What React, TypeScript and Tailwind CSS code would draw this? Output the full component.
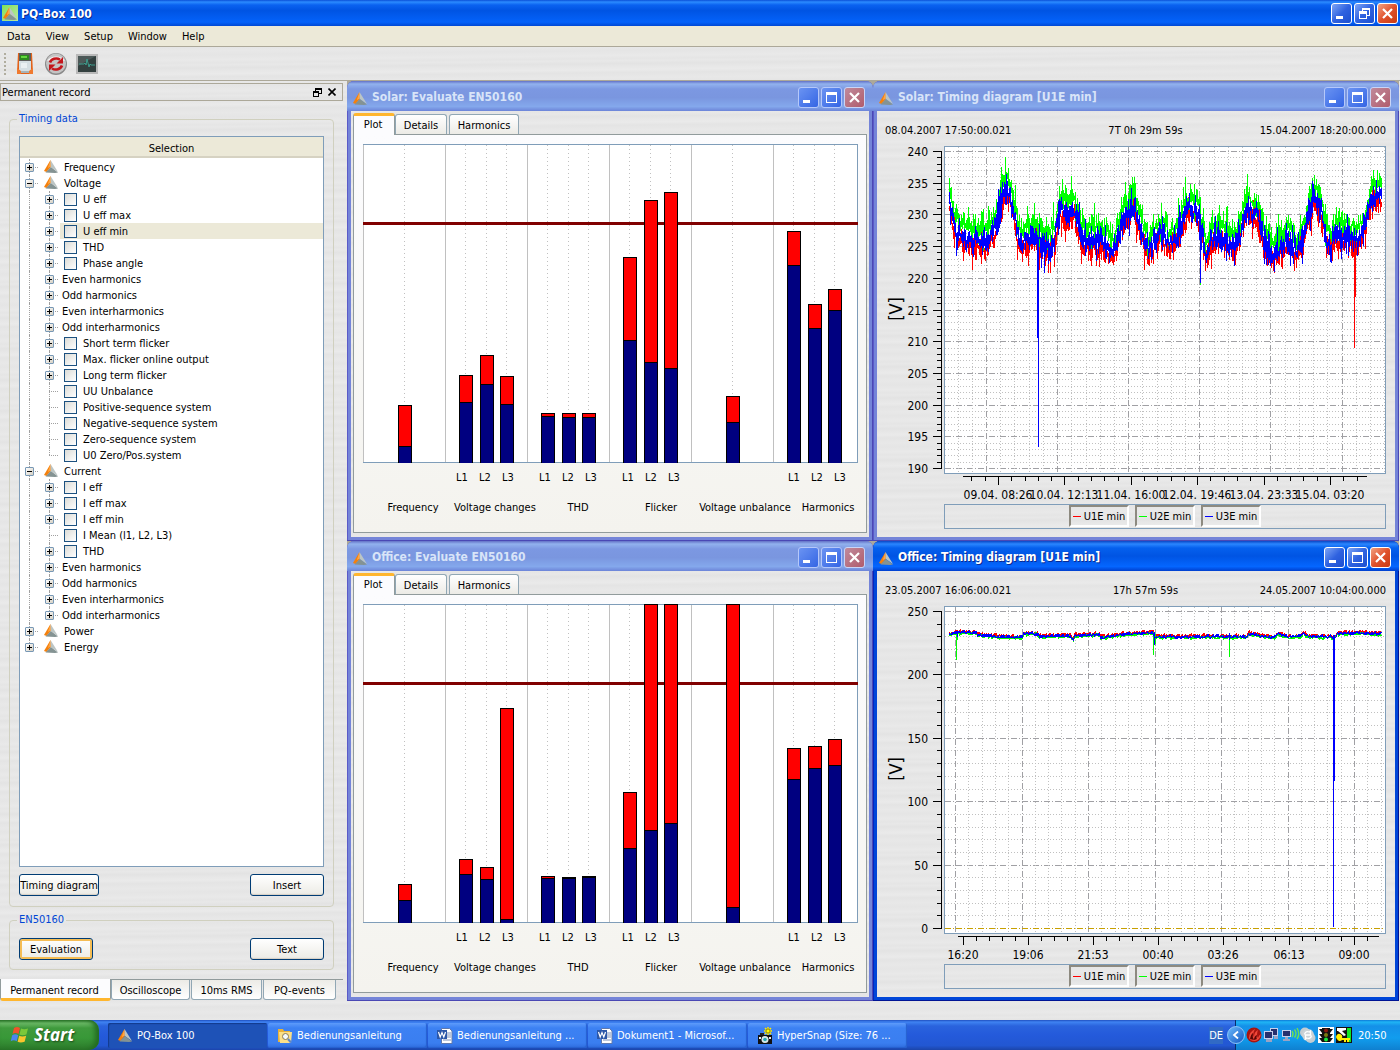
import React from "react";

const METAL =
  "bg-[#e6e6e6] bg-[repeating-linear-gradient(179.4deg,#e9e9e9_0px,#e5e5e5_3px,#e8e8e8_5px,#e3e3e3_8px,#e7e7e7_11px,#eaeaea_14px,#e4e4e4_17px,#e8e8e8_22px,#e5e5e5_26px,#e9e9e9_31px)]";

/* ---------- icons ---------- */

function Prism({ className = "" }: { className?: string }) {
  return (
    <svg viewBox="0 0 16 15" className={`shrink-0 ${className}`} aria-hidden="true">
      <path d="M7.5 1 L1 12 L3.5 13 L7.8 8 Z" fill="#f5800c" />
      <path d="M7.5 1 L4.8 9 L7.8 7.5 Z" fill="#ffa544" />
      <path d="M7.5 1 L15 13 L7.8 8 Z" fill="#bcc5c4" />
      <path d="M7.8 8 L15 13.5 L12 14 L2.5 13.6 Z" fill="#849393" />
    </svg>
  );
}

function BoxIcon() {
  return (
    <svg viewBox="0 0 18 24" className="h-6 w-[18px]" aria-hidden="true">
      <path d="M2 1h14l1 20h-3v1H4v-1H1z" fill="#e2621b" />
      <rect x="3" y="1" width="12" height="17" fill="#5d5f5c" />
      <rect x="4" y="3" width="9" height="5" fill="#2d8a1e" />
      <rect x="5" y="4" width="6" height="2" fill="#62d83c" />
      <path d="M3 9h12v9l-2 2H5l-2-2z" fill="#d5dfe3" />
      <path d="M5 11h6v5H5z" fill="#eaf0f2" />
      <path d="M1 16l4 3v3H1zM17 16l-4 3v3h4z" fill="#f07a30" />
      <path d="M5 19h8v2H5z" fill="#a7b3b7" />
    </svg>
  );
}

function SyncIcon() {
  return (
    <svg viewBox="0 0 24 24" className="h-6 w-6" aria-hidden="true">
      <circle cx="12" cy="12" r="11" fill="#8a8a8a" />
      <circle cx="12" cy="11.5" r="10" fill="#c4c4c4" />
      <path d="M3 9a10 8 0 0 1 18 0a18 9 0 0 0-18 0z" fill="#f4f4f4" />
      <path d="M6 10.500a6.500 5.500 0 0 1 10-3" fill="none" stroke="#c4161c" strokeWidth="2.600" />
      <path d="M19 5v6.500h-6.500z" fill="#c4161c" />
      <path d="M18 13.500a6.500 5.500 0 0 1-10 3" fill="none" stroke="#c4161c" strokeWidth="2.600" />
      <path d="M5 19v-6.500h6.500z" fill="#c4161c" />
    </svg>
  );
}

function ScopeIcon() {
  return (
    <svg viewBox="0 0 22 20" className="h-5 w-[22px]" aria-hidden="true">
      <rect x="0" y="0" width="22" height="20" fill="#b9b9b9" />
      <rect x="2" y="2" width="18" height="16" fill="#33403f" />
      <path d="M2 2h18L2 12z" fill="#4d5958" />
      <path d="M3 10h5l1-1 1 2 1-6 2 8 1-3 1 1h4" fill="none" stroke="#3f9c8d" />
    </svg>
  );
}

/* ---------- window frame ---------- */

type ControlKind = "min" | "max" | "restore" | "close";

function Control({ kind, active }: { kind: ControlKind; active: boolean }) {
  const tone =
    kind === "close"
      ? active
        ? "border-white bg-linear-to-br from-[#f0a080] via-[#e0512b] to-[#c93a10]"
        : "border-[#c9d5f7] bg-linear-to-br from-[#c08a9c] to-[#b05c6c]"
      : active
        ? "border-white bg-linear-to-br from-[#7fa4f5] via-[#2f62e0] to-[#1c4fd0]"
        : "border-[#b5c8fa] bg-linear-to-br from-[#6b93f2] to-[#3565e4]";
  return (
    <button
      type="button"
      aria-label={kind}
      className={`flex size-[21px] items-center justify-center rounded-[3px] border ${tone}`}
    >
      <svg viewBox="0 0 19 19" className="size-[19px]" shapeRendering={kind === "close" ? "auto" : "crispEdges"} aria-hidden="true">
        {kind === "min" && <rect x="4" y="12" width="7" height="3" fill="#fff" />}
        {kind === "max" && <path d="M4 4h11v11H4zM5 7v7h9V7z" fill="#fff" fillRule="evenodd" />}
        {kind === "restore" && (
          <path
            d="M7 4h8v8h-3v3H4V7h3zM8 6v1h4v4h2V6zM5 10v4h6v-4z"
            fill="#fff"
            fillRule="evenodd"
          />
        )}
        {kind === "close" && <path d="M5 5l9 9M14 5l-9 9" stroke="#fff" strokeWidth="2.200" />}
      </svg>
    </button>
  );
}

function Frame({ title, active = false, children }: { title: string; active?: boolean; children: React.ReactNode }) {
  return (
    <section
      className={`flex min-w-0 flex-col rounded-t-[7px] px-1 pb-1 ${
        active
          ? "bg-[#0046d8] shadow-[inset_-1px_-1px_0_#001494,inset_1px_0_0_#0026c0]"
          : "bg-[#7484d8] shadow-[inset_-1px_-1px_0_#4a48b4,inset_1px_0_0_#5a5ac8]"
      }`}
    >
      <header
        className={`-mx-1 flex h-[30px] shrink-0 items-center rounded-t-[7px] pr-2 pl-[5px] ${
          active
            ? "bg-[linear-gradient(#0a47c6_0,#2a86ff_3px,#0560ee_7px,#0054e3_50%,#0466ff_85%,#003fce_100%)]"
            : "bg-[linear-gradient(#6371c6_0,#92b2ee_3px,#7c98e2_8px,#7a96df_55%,#84a8ec_85%,#6c84d8_100%)]"
        }`}
      >
        <Prism className="mt-1 h-[15px] w-4" />
        <h2
          className={`ml-1 flex-1 truncate pt-0.5 text-[12px] font-bold ${
            active ? "text-white [text-shadow:1px_1px_0_#0a2a90]" : "text-[#d8e4f8]"
          }`}
        >
          {title}
        </h2>
        <div className="mt-0.5 flex gap-0.5">
          <Control kind="min" active={active} />
          <Control kind="max" active={active} />
          <Control kind="close" active={active} />
        </div>
      </header>
      <div className={`flex flex-1 flex-col ${METAL}`}>{children}</div>
    </section>
  );
}

/* ---------- evaluation bar chart ---------- */

type Bar = { x: number; top: number; mid: number };

const BAR_X = [398, 459, 480, 500, 541, 562, 582, 623, 644, 664, 726, 787, 808, 828];
const toBars = (pairs: number[][]): Bar[] => pairs.map(([top, mid], i) => ({ x: BAR_X[i], top, mid }));

const SOLAR_BARS = toBars([
  [405, 446], [375, 402], [355, 384], [376, 404], [413, 416], [413, 417], [413, 417],
  [257, 340], [200, 362], [192, 368], [396, 422], [231, 265], [304, 328], [289, 310],
]);
const OFFICE_BARS = toBars([
  [424, 440], [399, 414], [407, 419], [248, 459], [416, 418], [417, 418], [416, 417],
  [332, 388], [144, 370], [144, 363], [144, 447], [288, 319], [286, 308], [279, 305],
]);

const PHASE_LABELS: [number, string][] = [
  [462, "L1"], [485, "L2"], [508, "L3"],
  [545, "L1"], [568, "L2"], [591, "L3"],
  [628, "L1"], [651, "L2"], [674, "L3"],
  [794, "L1"], [817, "L2"], [840, "L3"],
];
const GROUP_LABELS: [number, string][] = [
  [413, "Frequency"], [495, "Voltage changes"], [578, "THD"],
  [661, "Flicker"], [745, "Voltage unbalance"], [828, "Harmonics"],
];

function BarPlot({ bars, label }: { bars: Bar[]; label: string }) {
  return (
    <svg viewBox="354 135 512 397" className="block w-full" role="img" aria-label={label}>
      <g shapeRendering="crispEdges">
        <rect x="363" y="144" width="495" height="319" fill="#fff" />
        <path d="M363 144.500H858M363 462.500H858M857.500 144V463" stroke="#7f9db9" fill="none" />
        {[363, 445, 527, 609, 691, 773].map((x) => (
          <path key={x} d={`M${x}.5 145V462`} stroke="#c0c0c0" />
        ))}
        {BAR_X.map((x) => (
          <path key={x} d={`M${x + 6}.5 145V462`} stroke="#c0c0c0" strokeDasharray="1 3" />
        ))}
        <rect x="363" y="222" width="495" height="3" fill="#800000" />
        {bars.map((b) => (
          <g key={b.x}>
            <rect x={b.x} y={b.top} width="14" height={463 - b.top} fill="#000" />
            <rect x={b.x + 1} y={b.top + 1} width="12" height={Math.max(b.mid - b.top - 1, 0)} fill="#f00" />
            <rect x={b.x + 1} y={b.mid + 1} width="12" height={462 - b.mid} fill="#000080" />
          </g>
        ))}
      </g>
      <g fontSize="11" textAnchor="middle">
        {PHASE_LABELS.map(([x, t]) => (
          <text key={x} x={x} y="481">{t}</text>
        ))}
        {GROUP_LABELS.map(([x, t]) => (
          <text key={x} x={x} y="511">{t}</text>
        ))}
      </g>
    </svg>
  );
}

function EvaluateWindow({ title, bars }: { title: string; bars: Bar[] }) {
  return (
    <Frame title={title}>
      <div role="tablist" className="relative z-10 -mb-px flex items-end pt-0.5 pl-0.5 text-[11px]">
        <button
          type="button"
          role="tab"
          aria-selected="true"
          className="h-[22px] w-[42px] rounded-t-[3px] border-x border-t-[3px] border-x-[#919b9c] border-t-[#ffb62e] bg-[#fcfcfe] pr-0.5 pb-0.5 leading-4"
        >
          Plot
        </button>
        <button
          type="button"
          role="tab"
          className="mb-px h-5 w-[52px] rounded-t-[3px] border border-b-0 border-[#91a7b4] bg-linear-to-b from-white to-[#ecebe6] pt-0.5 leading-4"
        >
          Details
        </button>
        <button
          type="button"
          role="tab"
          className="mb-px ml-0.5 h-5 w-[70px] rounded-t-[3px] border border-b-0 border-[#91a7b4] bg-linear-to-b from-white to-[#ecebe6] pt-0.5 leading-4"
        >
          Harmonics
        </button>
      </div>
      <div className="mx-0.5 border border-[#919b9c] bg-linear-to-b from-[#fcfcfe] to-[#f4f3ee]">
        <BarPlot bars={bars} label={title} />
      </div>
    </Frame>
  );
}

/* ---------- timing diagram ---------- */

function makeRandom(seed: number) {
  let s = seed;
  return () => {
    s = (s * 1664525 + 1013904223) % 4294967296;
    return s / 4294967296 - 0.5;
  };
}

function interpolate(points: number[][], x: number) {
  for (let i = 1; i < points.length; i++) {
    const [x0, y0] = points[i - 1];
    const [x1, y1] = points[i];
    if (x <= x1) return y0 + ((y1 - y0) * (x - x0)) / (x1 - x0);
  }
  return points[points.length - 1][1];
}

const DAILY = [
  [949, 203], [954, 228], [960, 236], [967, 241], [975, 239], [985, 240], [994, 232], [998, 212], [1003, 193],
  [1006, 188], [1010, 197], [1015, 222], [1020, 243], [1028, 238], [1034, 234], [1040, 243], [1050, 248],
  [1054, 238], [1058, 216], [1062, 208], [1068, 216], [1073, 210], [1078, 224], [1084, 243], [1092, 240],
  [1100, 240], [1108, 248], [1112, 253], [1117, 240], [1122, 222], [1128, 212], [1133, 203], [1138, 222],
  [1145, 243], [1150, 249], [1160, 233], [1168, 243], [1176, 240], [1184, 218], [1188, 208], [1198, 214],
  [1202, 235], [1206, 258], [1210, 240], [1218, 235], [1226, 242], [1234, 249], [1240, 233], [1247, 207],
  [1252, 214], [1258, 218], [1264, 245], [1272, 256], [1280, 248], [1288, 240], [1296, 252], [1302, 240],
  [1308, 214], [1314, 197], [1320, 208], [1325, 235], [1330, 249], [1335, 234], [1345, 235], [1355, 243],
  [1362, 233], [1367, 214], [1371, 198], [1381, 196],
];

function noisyTrace(seed: number, shift: number, spread: number) {
  const rnd = makeRandom(seed);
  const out: string[] = [];
  for (let x = 949; x <= 1381; x++) {
    const base = interpolate(DAILY, x) + shift + rnd() * 10;
    const wide = rnd() > 0.3 ? 1.8 : 1;
    const a = Math.round(base - Math.abs(rnd()) * spread * wide);
    const b = Math.round(base + Math.abs(rnd()) * spread * wide);
    out.push(`${x}.5 ${a}L${x}.5 ${b}`);
  }
  return "M" + out.join("L");
}

const LEVEL = [
  [949, 173], [957, 171], [976, 171], [977, 173], [997, 175], [1022, 176], [1023, 172], [1036, 172], [1039, 175],
  [1070, 174], [1073, 179], [1074, 174], [1098, 173], [1101, 176], [1120, 173], [1153, 171], [1154, 177],
  [1156, 175], [1228, 175], [1247, 175], [1248, 172], [1262, 174], [1274, 176], [1278, 172], [1286, 175],
  [1301, 175], [1303, 171], [1308, 175], [1330, 175], [1334, 177], [1337, 172], [1355, 171], [1372, 172], [1381, 172],
];

function flatTrace(seed: number, shift: number, height: number) {
  const rnd = makeRandom(seed);
  const out: string[] = [];
  for (let x = 949; x <= 1381; x++) {
    const y = Math.round(interpolate(LEVEL, x) + shift + rnd() * 2);
    out.push(`${x}.5 ${y}L${x}.5 ${y + height}`);
  }
  return "M" + out.join("L");
}

type DiagramData = {
  yLabels: number[];
  minorPerMajor: number;
  gridX: number;
  gridStep: number;
  axisFrom: number;
  axisTo: number;
  tickX: number;
  tickStep: number;
  xLabels: string[];
  zeroLine: boolean;
  red: string;
  green: string;
  blue: string;
};

const SOLAR: DiagramData = {
  yLabels: [240, 235, 230, 225, 220, 215, 210, 205, 200, 195, 190],
  minorPerMajor: 5,
  gridX: 986,
  gridStep: 71.1,
  axisFrom: 963,
  axisTo: 1367,
  tickX: 998,
  tickStep: 66.4,
  xLabels: ["09.04. 08:26", "10.04. 12:13", "11.04. 16:00", "12.04. 19:46", "13.04. 23:33", "15.04. 03:20"],
  zeroLine: false,
  red: noisyTrace(77, 6, 24) + "M1354.500 250V348M1355.500 250V297",
  green:
    noisyTrace(3, -13, 25) +
    "M1005.500 157V190M1062.500 179V205M1134.500 177V200M1185.500 177V205M1247.500 174V200M1200.500 270V285",
  blue: noisyTrace(19, 0, 26) + "M1037.500 240V338M1038.500 240V447M1200.500 230V283",
};

const OFFICE: DiagramData = {
  yLabels: [250, 200, 150, 100, 50, 0],
  minorPerMajor: 5,
  gridX: 955,
  gridStep: 66.5,
  axisFrom: 958,
  axisTo: 1379,
  tickX: 963,
  tickStep: 65.1,
  xLabels: ["16:20", "19:06", "21:53", "00:40", "03:26", "06:13", "09:00"],
  zeroLine: true,
  red: flatTrace(5, 0, 1),
  green: flatTrace(9, 2, 1) + "M956.500 173V200M957.500 173V180M1153.500 174V195M1155.500 174V184M1229.500 174V197",
  blue:
    flatTrace(14, 1, 1) +
    "M1333.500 175V321M1334.500 175V321M1333.500 321V467M957.500 171V177M1154.500 172V185M1229.500 173V180",
};

const TOP = 151;
const SPAN = 317;

function ticks(start: number, step: number, from: number, to: number) {
  const list: { x: number; major: boolean }[] = [];
  for (let i = -10; i < 60; i++) {
    const x = Math.round(start + (i * step) / 5);
    if (x >= from && x <= to) list.push({ x, major: i % 5 === 0 });
  }
  return list;
}

function Diagram({ d, label }: { d: DiagramData; label: string }) {
  const rows = (d.yLabels.length - 1) * d.minorPerMajor;
  const yTicks = Array.from({ length: rows + 1 }, (_, i) => ({
    y: Math.round(TOP + (SPAN * i) / rows),
    major: i % d.minorPerMajor === 0,
  }));
  return (
    <svg viewBox="877 142 518 362" className="block w-full" role="img" aria-label={label}>
      <g shapeRendering="crispEdges" fill="none">
        <rect x="944.500" y="146.500" width="441" height="327" fill="#fff" stroke="#7f9db9" />
        {yTicks.map(({ y, major }) => (
          <path
            key={y}
            d={`M945 ${y}.5H1385`}
            stroke={major ? "#a0a0a4" : "#c0c0c0"}
            strokeDasharray={major ? "6 2 1 2" : "1 2"}
          />
        ))}
        {ticks(d.gridX, d.gridStep, 946, 1384).map(({ x, major }) => (
          <path
            key={x}
            d={`M${x}.5 147V473`}
            stroke={major ? "#a0a0a4" : "#c0c0c0"}
            strokeDasharray={major ? "6 2 1 2" : "1 2"}
          />
        ))}
        {d.zeroLine && <path d="M945 468.500H1385" stroke="#c8a000" strokeDasharray="6 2 1 2" />}
        <path d={d.red} stroke="#f00" />
        <path d={d.green} stroke="#0f0" />
        <path d={d.blue} stroke="#00f" />
        <path d="M941.500 151V469" stroke="#000" />
        {yTicks.map(({ y, major }) => (
          <path key={y} d={`M${major ? 933 : 937} ${y}.5H941`} stroke="#000" />
        ))}
        <path d={`M${d.axisFrom} 476.500H${d.axisTo}`} stroke="#000" />
        {ticks(d.tickX, d.tickStep, d.axisFrom, d.axisTo).map(({ x, major }) => (
          <path key={x} d={`M${x}.5 476V${major ? 485 : 481}`} stroke="#000" />
        ))}
      </g>
      <g fontSize="12" textAnchor="end">
        {d.yLabels.map((v, i) => (
          <text key={v} x="928" y={Math.round(TOP + (SPAN * i) / (d.yLabels.length - 1)) + 5}>{v}</text>
        ))}
      </g>
      <g fontSize="12" textAnchor="middle">
        {d.xLabels.map((t, i) => (
          <text key={t} x={Math.round(d.tickX + i * d.tickStep)} y="499">{t}</text>
        ))}
      </g>
      <text fontSize="18" textAnchor="middle" transform="translate(902 309) rotate(-90)">[V]</text>
    </svg>
  );
}

function LegendItem({ color, children }: { color: string; children: string }) {
  return (
    <button
      type="button"
      className="flex h-[22px] w-[60px] items-center justify-center gap-[3px] border-2 border-t-[#8d8a80] border-r-white border-b-white border-l-[#8d8a80]"
    >
      <span className={`h-px w-2 ${color}`} />
      <span className="pt-0.5">{children}</span>
    </button>
  );
}

function TimingWindow(props: {
  title: string;
  active?: boolean;
  from: string;
  span: string;
  to: string;
  diagram: DiagramData;
}) {
  return (
    <Frame title={props.title} active={props.active}>
      <div className="flex h-[31px] items-center justify-between pt-[9px] pr-[9px] pl-2 text-[11px]">
        <span>{props.from}</span>
        <span className="pl-5">{props.span}</span>
        <span>{props.to}</span>
      </div>
      <Diagram d={props.diagram} label={props.title} />
      <div className="mr-[9px] mb-2 ml-[67px] flex h-[25px] justify-center gap-1.5 border border-[#7f9db9] text-[11px]">
        <LegendItem color="bg-[#f00]">U1E min</LegendItem>
        <LegendItem color="bg-[#0f0]">U2E min</LegendItem>
        <LegendItem color="bg-[#00f]">U3E min</LegendItem>
      </div>
    </Frame>
  );
}

/* ---------- selection tree ---------- */

type Leaf = { label: string; box?: boolean; expand?: boolean; selected?: boolean };
type Branch = { label: string; items?: Leaf[] };

const check = (label: string, selected = false): Leaf => ({ label, box: true, expand: true, selected });
const plain = (label: string): Leaf => ({ label, expand: true });
const single = (label: string): Leaf => ({ label, box: true });

const TREE: Branch[] = [
  { label: "Frequency" },
  {
    label: "Voltage",
    items: [
      check("U eff"), check("U eff max"), check("U eff min", true), check("THD"), check("Phase angle"),
      plain("Even harmonics"), plain("Odd harmonics"), plain("Even interharmonics"), plain("Odd interharmonics"),
      check("Short term flicker"), check("Max. flicker online output"), check("Long term flicker"),
      single("UU Unbalance"), single("Positive-sequence system"), single("Negative-sequence system"),
      single("Zero-sequence system"), single("U0 Zero/Pos.system"),
    ],
  },
  {
    label: "Current",
    items: [
      check("I eff"), check("I eff max"), check("I eff min"), single("I Mean (l1, L2, L3)"), check("THD"),
      plain("Even harmonics"), plain("Odd harmonics"), plain("Even interharmonics"), plain("Odd interharmonics"),
    ],
  },
  { label: "Power" },
  { label: "Energy" },
];

function Joint({ last, sign, stem }: { last?: boolean; sign?: "+" | "-"; stem?: boolean }) {
  return (
    <span className="relative block h-4 w-5 shrink-0">
      <span className={`absolute top-0 left-[9px] border-l border-dotted border-[#a0a0a0] ${last ? "h-2" : "h-4"}`} />
      {!stem && <span className="absolute top-2 left-[9px] w-[9px] border-t border-dotted border-[#a0a0a0]" />}
      {sign && (
        <button
          type="button"
          aria-label={sign === "+" ? "Expand" : "Collapse"}
          className="absolute top-1 left-[5px] size-[9px] rounded-[1px] border border-[#7898b5] bg-linear-to-br from-white to-[#d5cfc2]"
        >
          <span className="absolute top-[3px] left-px h-px w-[5px] bg-black" />
          {sign === "+" && <span className="absolute top-px left-[3px] h-[5px] w-px bg-black" />}
        </button>
      )}
    </span>
  );
}

function SelectionTree() {
  return (
    <ul className="text-[11px] leading-4">
      {TREE.map((branch, bi) => (
        <li key={branch.label}>
          <div className="flex h-4">
            <Joint last={bi === TREE.length - 1} sign={branch.items ? "-" : "+"} />
            <Prism className="ml-[3px] h-[15px] w-4" />
            <span className="ml-[5px] pt-px">{branch.label}</span>
          </div>
          {branch.items && (
            <ul>
              {branch.items.map((leaf, li) => (
                <li key={leaf.label} className="flex h-4">
                  <Joint stem />
                  <Joint last={li === branch.items!.length - 1} sign={leaf.expand ? "+" : undefined} />
                  {leaf.box ? (
                    <label className={`flex flex-1 items-center pl-1 ${leaf.selected ? "bg-[#ece9d8]" : ""}`}>
                      <input
                        type="checkbox"
                        className="mr-1.5 size-[13px] appearance-none border border-[#1c5180] bg-linear-to-br from-[#dcdcd7] to-white"
                      />
                      <span className="pt-px">{leaf.label}</span>
                    </label>
                  ) : (
                    <span className="pt-px pl-0.5">{leaf.label}</span>
                  )}
                </li>
              ))}
            </ul>
          )}
        </li>
      ))}
    </ul>
  );
}

function PushButton({ children, width, hot = false }: { children: string; width: string; hot?: boolean }) {
  return (
    <button
      type="button"
      className={`h-[22px] rounded-[3px] border border-[#003c74] bg-linear-to-b from-white to-[#ecebe5] pt-0.5 text-[11px] leading-[18px] whitespace-nowrap ${width} ${
        hot ? "shadow-[inset_0_0_0_2px_#f5bd55]" : "shadow-[inset_0_-1px_1px_#d6d0c5]"
      }`}
    >
      {children}
    </button>
  );
}

function DockTab({ children, width }: { children: string; width: string }) {
  return (
    <button
      type="button"
      role="tab"
      className={`h-5 rounded-b-[3px] border border-t-0 border-[#91a7b4] bg-linear-to-b from-[#ecebe6] to-white pt-[3px] text-[11px] leading-4 ${width}`}
    >
      {children}
    </button>
  );
}

function Dock() {
  return (
    <aside className="flex w-[347px] shrink-0 flex-col pt-0.5 pr-1">
      <div className="flex h-[18px] items-center border border-[#aca899] pl-px text-[11px]">
        <h1 className="flex-1 pt-0.5">Permanent record</h1>
        <button type="button" aria-label="Undock" className="mr-1.5">
          <svg viewBox="0 0 9 9" className="size-[9px]" shapeRendering="crispEdges" aria-hidden="true">
            <path d="M2 0h7v6H6v3H0V3h2zM3 2v1h3v2h2V2zM1 5v3h4V5z" fill="#000" fillRule="evenodd" />
          </svg>
        </button>
        <button type="button" aria-label="Close panel" className="mr-1.5">
          <svg viewBox="0 0 8 8" className="size-2" aria-hidden="true">
            <path d="M0.500 0.500l7 7M7.500 0.500l-7 7" stroke="#000" strokeWidth="1.600" />
          </svg>
        </button>
      </div>
      <fieldset className="mt-[11px] mr-[9px] ml-[9px] flex flex-1 flex-col rounded-[4px] border border-[#d0d0bf] px-[9px] pb-2.5">
        <legend className="-ml-0.5 px-0.5 text-[11px] leading-[14px] text-[#0046d5]">Timing data</legend>
        <div className="mt-2.5 flex-1 border border-[#7f9db9] bg-white">
          <div className="mb-px h-[21px] border-b-2 border-[#d6d2c2] bg-[#ece9d8] text-center text-[11px] leading-[23px]">
            Selection
          </div>
          <SelectionTree />
        </div>
        <div className="mt-[7px] flex justify-between">
          <PushButton width="w-[80px]">Timing diagram</PushButton>
          <PushButton width="w-[74px]">Insert</PushButton>
        </div>
      </fieldset>
      <fieldset className="mt-1.5 mr-[9px] ml-[9px] rounded-[4px] border border-[#d0d0bf] px-[9px] pb-[9px]">
        <legend className="-ml-0.5 px-0.5 text-[11px] leading-[14px] text-[#0046d5]">EN50160</legend>
        <div className="mt-[11px] flex justify-between">
          <PushButton width="w-[74px]" hot>Evaluation</PushButton>
          <PushButton width="w-[74px]">Text</PushButton>
        </div>
      </fieldset>
      <div role="tablist" className="mt-[9px] flex items-start border-t border-[#919b9c]">
        <button
          type="button"
          role="tab"
          aria-selected="true"
          className="-mt-px h-[22px] w-[111px] rounded-b-[3px] border-x border-b-[3px] border-x-[#919b9c] border-b-[#ffb62e] bg-[#fcfcfe] pt-1 pr-0.5 text-[11px]"
        >
          Permanent record
        </button>
        <DockTab width="w-[79px]">Oscilloscope</DockTab>
        <DockTab width="ml-px w-[71px]">10ms RMS</DockTab>
        <DockTab width="ml-px w-[73px]">PQ-events</DockTab>
      </div>
    </aside>
  );
}

/* ---------- task bar ---------- */

function FlagLogo() {
  return (
    <svg viewBox="0 0 20 18" className="h-[18px] w-5" aria-hidden="true">
      <path d="M4 2q3-2 6 0l-1.500 6q-3-2-6 0z" fill="#f0522a" />
      <path d="M11 2.500q3 1.500 7 0l-1.600 6q-4 1.500-7 0z" fill="#7cc83a" />
      <path d="M2.200 9.300q3-2 6 0l-1.500 6q-3-2-6 0z" fill="#4a86f0" />
      <path d="M9.200 9.800q3 1.500 7 0l-1.600 6q-4 1.500-7 0z" fill="#fbc52d" />
    </svg>
  );
}

function FolderIcon() {
  return (
    <svg viewBox="0 0 16 16" className="size-4" aria-hidden="true">
      <path d="M1 1h5l1 2h6v11H1z" fill="#e8b23a" />
      <path d="M2 4h13l-1 11H3z" fill="#fbe08a" />
      <circle cx="8.500" cy="8.500" r="3" fill="#f4fafe" stroke="#8a7a50" />
      <path d="M11 11l3 3.500" stroke="#5d86c8" strokeWidth="2" />
    </svg>
  );
}

function WordIcon() {
  return (
    <svg viewBox="0 0 16 16" className="size-4" aria-hidden="true">
      <path d="M4.500 .5h8l2.500 2.500v12.500H4.500z" fill="#fff" stroke="#5f78ad" />
      <path d="M10 5h4M10 7h4M10 9h4M6 12h8" stroke="#7b8fb9" />
      <rect x="0" y="2" width="10" height="9" fill="#2b57a8" />
      <path d="M1.500 4l1.700 5L5 4.500 6.800 9l1.700-5" fill="none" stroke="#fff" strokeWidth="1.200" />
    </svg>
  );
}

function CameraIcon() {
  return (
    <svg viewBox="0 0 16 18" className="h-[18px] w-4" aria-hidden="true">
      <path d="M11 0v8M7 4h8M8 1l6 6M14 1L8 7" stroke="#ffe600" strokeWidth="1.500" />
      <circle cx="11" cy="4" r="2" fill="#ff0" stroke="#554a00" strokeWidth=".6" />
      <rect x="1" y="8" width="14" height="9" fill="#111" />
      <path d="M3 6h4v2H3z" fill="#222" />
      <circle cx="8" cy="12.500" r="3.500" fill="#d9e8ea" />
      <circle cx="8" cy="12.500" r="1.800" fill="#2aa7b0" />
      <path d="M2 10h2v2H2zM12 10h2v2h-2z" fill="#eee" />
    </svg>
  );
}

function Task({ icon, label, active = false }: { icon: React.ReactNode; label: string; active?: boolean }) {
  return (
    <button
      type="button"
      className={`mr-px flex h-[25px] w-[159px] items-center gap-1 rounded-[2px] pl-[9px] text-[11px] whitespace-nowrap text-white ${
        active
          ? "bg-[#1e52b7] shadow-[inset_1px_1px_1px_#123a8c]"
          : "bg-[linear-gradient(#5d9bfb_0,#3c81f3_5px,#3a7ef0_80%,#2f6cdd_100%)] shadow-[inset_-1px_-1px_1px_#2660cf]"
      }`}
    >
      {icon}
      <span className="pt-px">{label}</span>
    </button>
  );
}

function TrayIcons() {
  return (
    <svg viewBox="0 0 106 16" className="h-4 w-[106px] shrink-0" aria-hidden="true">
      <circle cx="8" cy="8" r="7.500" fill="#a81410" />
      <path d="M3 11q0-6 6-9-3 5-1 8 0-5 4-7-2 5 0 8 1-3 3-4-1 6-6 7-5 0-6-3z" fill="#f0483a" />
      <path d="M4 12q1-5 3-6-1 4 1 7zM8 13q0-4 3-5-1 3 0 4z" fill="#5a0605" />
      <g stroke="#c6d0ec">
        <rect x="24.500" y="1.500" width="7" height="7" fill="#26306e" />
        <rect x="18.500" y="4.500" width="8" height="7" fill="#26306e" />
      </g>
      <path d="M20 12h6v3h-6zM28 9h4v3h-4z" fill="#9aa3c4" />
      <rect x="36.500" y="3.500" width="8" height="6" fill="#26306e" stroke="#c6d0ec" />
      <path d="M39 10h3v2h2v2h-7v-2h2z" fill="#9aa3c4" />
      <path d="M46 4q2 3 0 6M48.500 2.500q3 4 0 8M51 1q3.500 6 0 11" stroke="#6fe052" strokeWidth="1.400" fill="none" />
      <circle cx="59" cy="5.500" r="5" fill="#c5cdd2" />
      <circle cx="64.500" cy="11" r="5" fill="#c5cdd2" />
      <circle cx="62" cy="8" r="6" fill="#ccd3d7" />
      <path d="M58.500 7.500q1-4 5-2.500l1-1v4h-4M65.500 8.500q-1 4-5 2.500l-1 1v-4h4" stroke="#fff" strokeWidth="1.300" fill="none" />
      <rect x="72" y="0" width="16" height="16" fill="#fff" />
      <path d="M76 1h8v14h-8zM73 2h3v4zM87 2h-3v4zM73 7h3v4zM87 7h-3v4zM73 11h3v4zM87 11h-3v4z" fill="#111" />
      <circle cx="80" cy="3.500" r="2" fill="#8c1a10" />
      <circle cx="80" cy="8" r="2" fill="#7a7a10" />
      <circle cx="80" cy="12.500" r="2" fill="#18e838" />
      <rect x="90" y="0" width="16" height="16" fill="#111" />
      <path d="M101 1h4v14h-4z" fill="#10e820" />
      <path d="M91 1h9v2l-4 1 4 4-2 1-6-5h-1z" fill="#fff" />
      <path d="M91 12a3 3 0 1 1 5-1h8v2h-1v2h-2v-2h-1v2h-2v-2h-2a3 3 0 0 1-5-1z" fill="#fff000" />
    </svg>
  );
}

function TaskBar() {
  return (
    <footer className="flex h-[30px] shrink-0 items-stretch bg-[linear-gradient(#1f4fc0_0,#3f83f2_2px,#2a63dd_6px,#245adb_50%,#2257d2_85%,#1b45aa_100%)] text-white">
      <button
        type="button"
        className="flex w-[99px] items-center gap-1 rounded-r-[10px] bg-[linear-gradient(#2f7a2d_0,#6dbb68_3px,#3f9a3d_8px,#389838_60%,#2c7a2b_100%)] pl-2.5 shadow-[inset_-4px_0_5px_#236b22]"
      >
        <FlagLogo />
        <span className="font-['Open_Sans',sans-serif] text-[17px] leading-5 font-bold italic [text-shadow:1px_1px_2px_#1d4a1b]">
          Start
        </span>
      </button>
      <nav className="ml-[9px] flex flex-1 items-center pt-px">
        <Task active icon={<Prism className="h-[15px] w-4" />} label="PQ-Box 100" />
        <Task icon={<FolderIcon />} label="Bedienungsanleitung" />
        <Task icon={<WordIcon />} label="Bedienungsanleitung ..." />
        <Task icon={<WordIcon />} label="Dokument1 - Microsof..." />
        <Task icon={<CameraIcon />} label="HyperSnap (Size: 76 ..." />
      </nav>
      <span className="mr-3 self-center bg-[#316ac5] pt-px text-[11px] leading-4">DE</span>
      <div className="relative flex w-[165px] items-center border-l border-[#092e6b] bg-[linear-gradient(#0d78d8_0,#1fb5f5_2px,#1490e8_6px,#119dee_60%,#0f80d0_100%)] pl-2.5">
        <button
          type="button"
          aria-label="Show hidden icons"
          className="absolute top-[6px] -left-[9px] flex size-[18px] items-center justify-center rounded-full border border-[#8cc4f8] bg-linear-to-br from-[#6ab8fa] to-[#1358c4]"
        >
          <svg viewBox="0 0 8 8" className="size-2" aria-hidden="true">
            <path d="M6 0.500L2 4l4 3.500" fill="none" stroke="#fff" strokeWidth="1.800" />
          </svg>
        </button>
        <TrayIcons />
        <time className="ml-1.5 pt-0.5 text-[11px]">20:50</time>
      </div>
    </footer>
  );
}

/* ---------- page ---------- */

export default function App() {
  return (
    <div
      className={`flex min-h-screen flex-col overflow-hidden font-['DejaVu_Sans_Condensed','DejaVu_Sans',sans-serif] text-black ${METAL}`}
    >
      <header className="flex h-[26px] shrink-0 items-center bg-[linear-gradient(#0a50d8_0,#2b8bff_2px,#0a62f0_5px,#0054e3_40%,#0462fa_85%,#0048d4_100%)] pr-0.5 pl-0.5">
        <span className="flex size-4 items-center justify-center bg-linear-to-br from-[#7ee05a] to-[#b9e8a0]">
          <Prism className="h-[15px] w-4" />
        </span>
        <span className="ml-[3px] flex-1 pt-px text-[12px] font-bold text-white [text-shadow:1px_1px_0_#0a2a90]">PQ-Box 100</span>
        <div className="flex gap-0.5">
          <Control kind="min" active />
          <Control kind="restore" active />
          <Control kind="close" active />
        </div>
      </header>
      <nav className="flex h-[21px] shrink-0 items-center gap-[15px] border-b border-[#aca899] bg-[#ece9d8] pt-0.5 pl-[7px] text-[11px]">
        <button type="button">Data</button>
        <button type="button">View</button>
        <button type="button">Setup</button>
        <button type="button">Window</button>
        <button type="button">Help</button>
      </nav>
      <div className="flex h-[34px] shrink-0 items-center border-b border-[#aca899] pl-1">
        <span className="h-[22px] border-l-2 border-dotted border-[#b0ad9f]" />
        <button type="button" aria-label="Read PQ-Box" className="ml-2.5"><BoxIcon /></button>
        <button type="button" aria-label="Synchronise" className="ml-2.5"><SyncIcon /></button>
        <button type="button" aria-label="Online view" className="ml-2"><ScopeIcon /></button>
      </div>
      <main className="flex flex-1 pb-[19px]">
        <Dock />
        <div className="mr-px grid min-w-0 flex-1 auto-rows-min grid-cols-2 bg-[#aca899]">
          <EvaluateWindow title="Solar: Evaluate EN50160" bars={SOLAR_BARS} />
          <TimingWindow
            title="Solar: Timing diagram [U1E min]"
            from="08.04.2007 17:50:00.021"
            span="7T 0h 29m 59s"
            to="15.04.2007 18:20:00.000"
            diagram={SOLAR}
          />
          <EvaluateWindow title="Office: Evaluate EN50160" bars={OFFICE_BARS} />
          <TimingWindow
            active
            title="Office: Timing diagram [U1E min]"
            from="23.05.2007 16:06:00.021"
            span="17h 57m 59s"
            to="24.05.2007 10:04:00.000"
            diagram={OFFICE}
          />
        </div>
      </main>
      <TaskBar />
    </div>
  );
}
